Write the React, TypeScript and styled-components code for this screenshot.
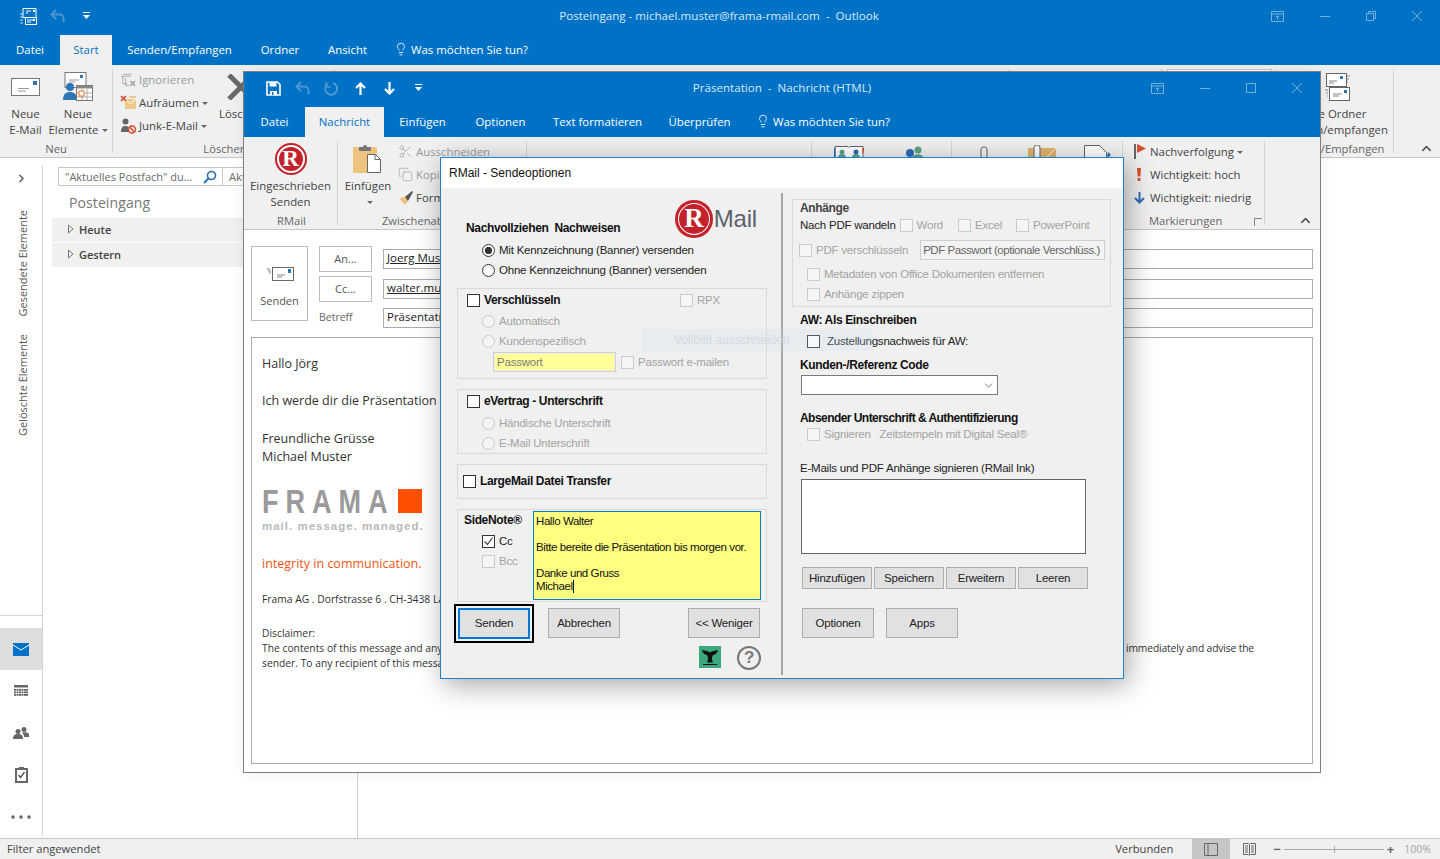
import { ReactNode } from 'react'
import styled, { createGlobalStyle } from 'styled-components'
import { ChevronUp, ChevronRight, ChevronDown, Lightbulb, Scissors, Copy } from 'lucide-react'

const BLUE = '#0072c6'
const RIBBON = '#f0f0f0'
const UI_FONT = "'Open Sans', 'Noto Sans', sans-serif"
const DLG_FONT = "'Liberation Sans', Arial, sans-serif"

const GlobalStyle = createGlobalStyle`
  html, body {
    margin: 0;
    width: 1440px;
    height: 859px;
    overflow: hidden;
    background: #fff;
    font-family: ${UI_FONT};
    font-size: 11.4px;
    color: #444;
  }
  * { box-sizing: border-box; }
`

/* ---------- outlook main window ---------- */

const Desktop = styled.div`
  position: relative;
  width: 1440px;
  height: 859px;
  overflow: hidden;
`

const Shell = styled.div`
  display: flex;
  flex-direction: column;
  height: 100%;
`

const Head = styled.div`
  background: ${BLUE};
  color: #fff;
  flex: none;
`

const TitleRow = styled.div`
  position: relative;
  display: flex;
  align-items: center;
  height: 32px;
`

const Qat = styled.div<{ $pad: number }>`
  display: flex;
  align-items: center;
  padding-left: ${p => p.$pad}px;
`

const QatCell = styled.div`
  flex: none;
  width: 29px;
  display: flex;
  align-items: center;
  justify-content: center;
`

const Title = styled.div<{ $cx: number }>`
  position: absolute;
  left: ${p => p.$cx}px;
  top: calc(50% - 1px);
  transform: translate(-50%, -50%);
  font-size: 11.6px;
  color: #d9e9f6;
  white-space: pre;
`

const WinButtons = styled.div`
  margin-left: auto;
  padding-right: 18px;
  display: flex;
  align-items: center;
  gap: 36px;
  opacity: 0.45;
`

const TabBar = styled.div`
  display: flex;
  height: 30px;
  margin-top: 3px;
  font-size: 11.4px;
`

const Tab = styled.div<{ $w: number; $active?: boolean }>`
  width: ${p => p.$w}px;
  display: flex;
  align-items: center;
  justify-content: center;
  padding-bottom: 2px;
  white-space: nowrap;
  background: ${p => (p.$active ? RIBBON : 'transparent')};
  color: ${p => (p.$active ? BLUE : '#fff')};
`

const TellMe = styled.div`
  display: flex;
  align-items: center;
  gap: 3px;
  padding: 0 0 2px 12px;
  white-space: nowrap;
`

const Ribbon = styled.div`
  flex: none;
  display: flex;
  height: 93px;
  background: ${RIBBON};
  border-bottom: 1px solid #c6c6c6;
  color: #444;
  font-size: 11.4px;
  line-height: 16px;
  overflow: hidden;
`

const Group = styled.div<{ $w: number }>`
  position: relative;
  flex: none;
  width: ${p => p.$w}px;
  display: flex;
  flex-direction: column;
  padding-top: 4px;

  &::after {
    content: '';
    position: absolute;
    right: 1px;
    top: 4px;
    height: 84px;
    width: 1px;
    background: #d4d4d4;
  }
`

const GroupBody = styled.div<{ $pad?: number }>`
  flex: 1;
  display: flex;
  min-height: 0;
  padding-left: ${p => p.$pad ?? 0}px;
`

const GroupLabel = styled.div<{ $align?: string; $pad?: number; $left?: number }>`
  flex: none;
  height: 18px;
  line-height: 20px;
  font-size: 11.2px;
  color: #666;
  text-align: ${p => p.$align ?? 'center'};
  padding-right: ${p => p.$pad ?? 0}px;
  padding-left: ${p => p.$left ?? 0}px;
  white-space: nowrap;
`

const BigButton = styled.div<{ $w: number; $icon: number }>`
  flex: none;
  width: ${p => p.$w}px;
  display: flex;
  flex-direction: column;
  align-items: center;
  text-align: center;
  white-space: nowrap;

  & > :first-child {
    height: ${p => p.$icon}px;
    flex: none;
  }
`

const SmallStack = styled.div<{ $ml?: number; $top?: number; $mt?: number; $w?: number }>`
  display: flex;
  flex-direction: column;
  flex: none;
  width: ${p => (p.$w ? `${p.$w}px` : 'auto')};
  margin-left: ${p => p.$ml ?? 0}px;
  margin-top: ${p => p.$mt ?? 0}px;
  padding-top: ${p => p.$top ?? 0}px;
`

const SmallItem = styled.div<{ $dim?: boolean; $gap?: number }>`
  display: flex;
  align-items: center;
  gap: ${p => p.$gap ?? 4}px;
  height: 23px;
  white-space: nowrap;
  color: ${p => (p.$dim ? '#9a9a9a' : '#444')};
`

const Caret = styled.span`
  display: inline-block;
  margin-left: 3px;
  vertical-align: middle;
  border-left: 3px solid transparent;
  border-right: 3px solid transparent;
  border-top: 3px solid #666;
`

const Launcher = styled.span`
  position: absolute;
  right: 4px;
  bottom: 3px;
  width: 8px;
  height: 8px;
  border-left: 1px solid #888;
  border-top: 1px solid #888;
`

const Collapse = styled.div<{ $right: number }>`
  margin-left: auto;
  align-self: flex-end;
  margin-right: ${p => p.$right}px;
  height: 16px;
  color: #555;
`

const SearchStub = styled.div`
  margin: 0 0 0 4px;
  width: 105px;
  height: 24px;
  background: #fff;
  border: 1px solid #c6c6c6;
`

const Main = styled.div`
  flex: 1;
  display: flex;
  min-height: 0;
`

const Nav = styled.div`
  flex: none;
  width: 43px;
  display: flex;
  flex-direction: column;
  position: relative;
  align-items: stretch;

  &::after {
    content: '';
    position: absolute;
    right: 0;
    top: 8px;
    bottom: 2px;
    width: 1px;
    background: #d4d4d4;
  }
`

const NavToggle = styled.div`
  height: 40px;
  display: flex;
  align-items: center;
  justify-content: center;
  color: #555;
`

const VerticalLabel = styled.div<{ $mt: number }>`
  writing-mode: vertical-rl;
  transform: rotate(180deg);
  align-self: center;
  margin-top: ${p => p.$mt}px;
  margin-left: 3px;
  font-size: 11px;
  line-height: 16px;
  color: #555;
  white-space: nowrap;
`

const NavIcons = styled.div`
  margin-top: auto;
  padding-top: 12px;
  border-top: 1px solid #d4d4d4;
  margin-right: 1px;
`

const NavIcon = styled.div<{ $active?: boolean }>`
  height: 42px;
  display: flex;
  align-items: center;
  justify-content: center;
  background: ${p => (p.$active ? '#dedede' : 'transparent')};
`

const FolderPane = styled.div`
  flex: none;
  width: 315px;
  border-right: 1px solid #d0d0d0;
  padding-top: 9px;
`

const SearchRow = styled.div`
  display: flex;
  margin-left: 15px;
  height: 19px;
`

const SearchBox = styled.div<{ $w: number }>`
  width: ${p => p.$w}px;
  border: 1px solid #c6c6c6;
  display: flex;
  align-items: center;
  justify-content: space-between;
  padding: 0 5px 0 6px;
  color: #6a6a6a;
  font-size: 11px;
  white-space: nowrap;

  & + & {
    border-left: 0;
  }
`

const FolderTitle = styled.div`
  font-size: 14px;
  line-height: 20px;
  margin: 7px 0 5px 26px;
  color: #777;
  letter-spacing: 0.1px;
`

const DateRow = styled.div`
  height: 24px;
  margin: 0 0 1px 9px;
  background: #f0f0f0;
  display: flex;
  align-items: center;
  gap: 5px;
  padding: 0 0 2px 16px;
  font-size: 11px;
  font-weight: 600;
  color: #444;
`

const StatusBar = styled.div`
  flex: none;
  height: 21px;
  background: #f0f0f0;
  border-top: 1px solid #c6c6c6;
  display: flex;
  align-items: stretch;
  font-size: 11.2px;
  color: #444;
`

const StatusText = styled.div<{ $ml?: number; $auto?: boolean }>`
  display: flex;
  align-items: center;
  padding-bottom: 2px;
  margin-left: ${p => (p.$auto ? 'auto' : `${p.$ml ?? 0}px`)};
  white-space: nowrap;
`

const ViewButton = styled.div<{ $active?: boolean; $w: number; $ml?: number }>`
  width: ${p => p.$w}px;
  margin-left: ${p => p.$ml ?? 0}px;
  display: flex;
  align-items: center;
  justify-content: center;
  background: ${p => (p.$active ? '#c6c6c6' : 'transparent')};
`

const Zoomer = styled.div`
  display: flex;
  align-items: center;
  margin-left: 5px;
  width: 121px;
  gap: 3px;
  color: #555;
`

const ZoomTrack = styled.div`
  position: relative;
  flex: none;
  width: 100px;
  height: 1px;
  background: #aaa;

  &::after {
    content: '';
    position: absolute;
    left: 50px;
    top: -3px;
    width: 1px;
    height: 7px;
    background: #aaa;
  }
`

const ZoomSign = styled.span`
  font-weight: 700;
  font-size: 13px;
  line-height: 1;
  color: #666;
`

const ZoomPct = styled.div`
  display: flex;
  align-items: center;
  margin-left: 10px;
  color: #a5a5a5;
  font-size: 10.5px;
`

/* ---------- message window ---------- */

const MessageWindow = styled.div`
  position: absolute;
  left: 243px;
  top: 71px;
  width: 1078px;
  height: 702px;
  border: 1px solid #7f7f7f;
  background: #fff;
  display: flex;
  flex-direction: column;
  box-shadow: 0 0 14px rgba(0, 0, 0, 0.07);
`

const Compose = styled.div`
  flex: 1;
  display: flex;
  flex-direction: column;
  padding: 16px 7px 8px;
  min-height: 0;
`

const ComposeHead = styled.div`
  display: flex;
  gap: 11px;
`

const SendTile = styled.div`
  flex: none;
  width: 57px;
  height: 75px;
  border: 1px solid #bdbdbd;
  display: flex;
  flex-direction: column;
  align-items: center;
  justify-content: flex-end;
  gap: 12px;
  padding-bottom: 12px;
  font-size: 11px;
  color: #555;
`

const Fields = styled.div`
  flex: 1;
  display: flex;
  flex-direction: column;
  gap: 4px;
`

const FieldRow = styled.div<{ $mt?: number }>`
  display: flex;
  align-items: center;
  gap: 11px;
  height: 26px;
  margin-top: ${p => p.$mt ?? 0}px;
`

const AddrButton = styled.div`
  flex: none;
  width: 53px;
  height: 26px;
  padding-bottom: 2px;
  border: 1px solid #bdbdbd;
  display: flex;
  align-items: center;
  justify-content: center;
  font-size: 11px;
  color: #555;
`

const FieldLabel = styled.div`
  flex: none;
  width: 53px;
  padding-bottom: 2px;
  font-size: 10.5px;
  color: #666;
`

const FieldInput = styled.div`
  flex: 1;
  height: 20px;
  border: 1px solid #ababab;
  padding-left: 3px;
  line-height: 16px;
  font-size: 11.5px;
  color: #222;
  white-space: nowrap;
  overflow: hidden;
`

const Addressee = styled.span`
  text-decoration: underline;
`

const MailBody = styled.div`
  flex: 1;
  margin-top: 6px;
  border: 1px solid #ababab;
  padding: 17px 10px 0;
  overflow: hidden;
  color: #333;
`

const Line = styled.div<{ $mt?: number; $size?: number; $color?: string }>`
  margin-top: ${p => p.$mt ?? 0}px;
  font-size: ${p => p.$size ?? 12.5}px;
  line-height: ${p => ((p.$size ?? 12.5) < 12 ? 15 : 18)}px;
  color: ${p => p.$color ?? '#333'};
  white-space: nowrap;
`

const SplitLine = styled(Line)`
  display: flex;
  justify-content: space-between;
  padding-right: 48px;

  span:last-child {
    letter-spacing: -0.15px;
  }
`

const FramaRow = styled.div`
  display: flex;
  align-items: flex-start;
  margin-top: 23px;
  height: 25px;
`

const FramaWord = styled.div`
  flex: none;
  width: 136px;
  font-family: ${DLG_FONT};
  font-size: 33px;
  line-height: 25px;
  font-weight: 700;
  letter-spacing: 8.5px;
  color: #9a9a9a;
  white-space: nowrap;
  transform: scaleX(0.82);
  transform-origin: left center;
`

const FramaSquare = styled.div`
  width: 24px;
  height: 24px;
  background: #ff5000;
`

const FramaTag = styled.div`
  margin-top: 6px;
  font-family: ${DLG_FONT};
  font-size: 11.5px;
  line-height: 13px;
  font-weight: 700;
  letter-spacing: 1px;
  color: #b9b9b9;
  white-space: nowrap;
`

/* ---------- rmail dialog ---------- */

const Dialog = styled.div`
  position: absolute;
  left: 440px;
  top: 157px;
  width: 684px;
  height: 522px;
  background: ${RIBBON};
  border: 1px solid #1b83d6;
  box-shadow: 4px 6px 26px rgba(0, 0, 0, 0.35);
  font-family: ${DLG_FONT};
  font-size: 11.5px;
  letter-spacing: -0.22px;
  color: #222;
  display: flex;
  flex-direction: column;
`

const DialogTitle = styled.div`
  flex: none;
  height: 30px;
  background: #fff;
  padding-left: 8px;
  display: flex;
  align-items: center;
  font-size: 12px;
  letter-spacing: 0;
  color: #111;
`

const DialogBody = styled.div`
  flex: 1;
  display: flex;
  min-height: 0;
`

const LeftCol = styled.div`
  flex: none;
  width: 342px;
  margin: 5px 0 3px;
  padding: 7px 14px 0 16px;
  border-right: 2px solid #a5a5a5;
  display: flex;
  flex-direction: column;
`

const RightCol = styled.div`
  flex: 1;
  padding: 11px 0 0 9px;
  display: flex;
  flex-direction: column;
`

const HeadRow = styled.div`
  display: flex;
  justify-content: space-between;
  height: 40px;
  padding-right: 10px;
`

const SectionHead = styled.div<{ $mt?: number; $ml?: number; $color?: string; $tight?: boolean }>`
  margin-top: ${p => p.$mt ?? 0}px;
  margin-left: ${p => p.$ml ?? 0}px;
  font-weight: 700;
  font-size: 12px;
  line-height: 16px;
  letter-spacing: ${p => (p.$tight ? -0.55 : -0.35)}px;
  color: ${p => p.$color ?? '#111'};
  white-space: pre;
`

const Logo = styled.div`
  display: flex;
  align-items: center;
  height: 37px;
`

const LogoWord = styled.span`
  font-size: 24px;
  color: #59636e;
  margin-left: 1px;
  letter-spacing: -0.2px;
`

const Seal = styled.div<{ $size: number }>`
  flex: none;
  width: ${p => p.$size}px;
  height: ${p => p.$size}px;
  border-radius: 50%;
  background: #c4222a;
  box-shadow: inset 0 0 0 ${p => Math.round(p.$size / 15)}px #c4222a, inset 0 0 0 ${p => Math.round(p.$size / 9)}px #fff;
  color: #fff;
  display: flex;
  align-items: center;
  justify-content: center;
  font-family: 'Liberation Serif', serif;
  font-weight: 700;
  font-size: ${p => Math.round(p.$size * 0.72)}px;
`

const Option = styled.div<{ $ml?: number; $mt?: number; $h?: number; $off?: boolean; $gap?: number }>`
  display: flex;
  align-items: center;
  gap: ${p => p.$gap ?? 4}px;
  height: ${p => p.$h ?? 20}px;
  margin-left: ${p => p.$ml ?? 0}px;
  margin-top: ${p => p.$mt ?? 0}px;
  color: ${p => (p.$off ? '#a3a3a3' : '#222')};
  white-space: pre;
`

const Radio = styled.span<{ $on?: boolean; $off?: boolean }>`
  flex: none;
  width: 13px;
  height: 13px;
  border-radius: 50%;
  border: 1px solid ${p => (p.$off ? '#c8c8c8' : '#333')};
  background: ${p =>
    p.$on ? 'radial-gradient(circle, #333 0 3.4px, #fff 3.9px)' : p.$off ? '#f4f4f4' : '#fff'};
`

const Check = styled.span<{ $off?: boolean; $on?: boolean }>`
  flex: none;
  width: 13px;
  height: 13px;
  border: 1px solid ${p => (p.$off ? '#cbcbcb' : '#333')};
  background: ${p => (p.$off ? '#f5f5f5' : '#fff')};
  display: flex;

  svg {
    display: ${p => (p.$on ? 'block' : 'none')};
  }
`

const Box = styled.div<{ $h: number; $mt?: number; $pad?: number; $row?: boolean; $w?: number }>`
  flex: none;
  width: ${p => (p.$w ? `${p.$w}px` : 'auto')};
  height: ${p => p.$h}px;
  margin-top: ${p => p.$mt ?? 0}px;
  border: 1px solid #d9d9d9;
  padding-left: ${p => p.$pad ?? 9}px;
  display: flex;
  flex-direction: ${p => (p.$row ? 'row' : 'column')};
`

const SpreadRow = styled.div`
  display: flex;
  justify-content: space-between;
  padding-right: 46px;
`

const PasswordField = styled.div`
  flex: none;
  width: 123px;
  height: 20px;
  margin-left: 26px;
  background: #ffff99;
  border: 1px solid #d0d0d0;
  padding-left: 3px;
  line-height: 18px;
  color: #7d7d7d;
  outline: 1px solid #eee;
  outline-offset: -2px;
`

const FlatRow = styled.div<{ $mt?: number }>`
  display: flex;
  align-items: center;
  margin-top: ${p => p.$mt ?? 0}px;
`

const SideColumn = styled.div`
  flex: none;
  width: 69px;
  padding-top: 2px;
`

const NoteArea = styled.div`
  flex: none;
  width: 228px;
  height: 89px;
  margin-top: 1px;
  background: #ffff80;
  border: 1px solid #0b79d0;
  padding: 3px 2px;
  line-height: 13px;
  letter-spacing: -0.42px;
  color: #111;
  white-space: pre;
`

const Cursor = styled.span`
  display: inline-block;
  width: 1px;
  height: 13px;
  background: #111;
  vertical-align: top;
`

const Actions = styled.div`
  flex: none;
  display: flex;
  margin-top: 6px;
  height: 31px;
  padding-right: 7px;
`

const Btn = styled.div<{ $w?: number; $h?: number; $primary?: boolean; $ml?: number; $auto?: boolean }>`
  flex: none;
  width: ${p => p.$w ?? 72}px;
  height: ${p => p.$h ?? (p.$primary ? 31 : 30)}px;
  padding-bottom: 1px;
  margin-left: ${p => (p.$auto ? 'auto' : `${p.$ml ?? 0}px`)};
  background: #e1e1e1;
  border: ${p => (p.$primary ? '2px solid #0078d7' : '1px solid #adadad')};
  outline: ${p => (p.$primary ? '2px solid #000' : 'none')};
  outline-offset: 2px;
  display: flex;
  align-items: center;
  justify-content: center;
  color: #222;
  white-space: pre;
`

const Extras = styled.div`
  flex: none;
  display: flex;
  justify-content: flex-end;
  align-items: flex-start;
  gap: 16px;
  margin-top: 7px;
  padding-right: 6px;
`

const WhaleBadge = styled.div`
  width: 22px;
  height: 22px;
  background: #3ba77c;
  display: flex;
  align-items: center;
  justify-content: center;
`

const HelpBadge = styled.div`
  width: 24px;
  height: 24px;
  border: 2.5px solid #777;
  border-radius: 50%;
  display: flex;
  align-items: center;
  justify-content: center;
  font-weight: 700;
  font-size: 17px;
  color: #777;
`

const DisabledField = styled.div`
  flex: none;
  width: 185px;
  height: 20px;
  margin-left: 12px;
  border: 1px solid #cfcfcf;
  background: #f3f3f3;
  padding-left: 2px;
  line-height: 18px;
  letter-spacing: -0.45px;
  color: #666;
  white-space: nowrap;
`

const SelectBox = styled.div`
  flex: none;
  width: 197px;
  height: 20px;
  margin: 2px 0 0 9px;
  background: #fff;
  border: 1px solid #7a7a7a;
  display: flex;
  align-items: center;
  justify-content: flex-end;
  padding-right: 2px;
  color: #555;
`

const InkBox = styled.div`
  flex: none;
  width: 285px;
  height: 75px;
  margin: 3px 0 0 9px;
  background: #fff;
  border: 1px solid #666;
`

const BtnRow = styled.div<{ $mt: number; $gap: number }>`
  display: flex;
  gap: ${p => p.$gap}px;
  margin: ${p => p.$mt}px 0 0 10px;
`

const Ghost = styled.div`
  position: absolute;
  left: 642px;
  top: 329px;
  width: 230px;
  height: 22px;
  padding-left: 32px;
  line-height: 22px;
  font-family: ${DLG_FONT};
  font-size: 12px;
  color: #d6dbdf;
  background: rgba(200, 224, 244, 0.22);
  white-space: nowrap;
  pointer-events: none;
`

/* ---------- drawings ---------- */

const Envelope = () => (
  <svg width={29} height={18} viewBox="0 0 29 18">
    <rect x=".5" y=".5" width="28" height="17" fill="#fff" stroke="#777" />
    <rect x="22" y="3" width="4" height="4" fill="#2e75b6" />
    <path d="M7 10.500h11M7 13h8" stroke="#999" />
  </svg>
)

const SendIcon = () => (
  <svg width="28" height="14" viewBox="0 0 28 14">
    <rect x="6.500" y=".5" width="21" height="13" fill="#fff" stroke="#666" />
    <rect x="22" y="2" width="3" height="4" fill="#2e75b6" />
    <path d="M11 8h8M11 10h5M1 2h3M2 4h3M3 6h2" stroke="#888" />
  </svg>
)

const NewItemsIcon = () => (
  <svg width="30" height="30" viewBox="0 0 30 30">
    <rect x="2" y=".5" width="21" height="15" fill="#fff" stroke="#777" />
    <rect x="17" y="3" width="3" height="3" fill="#2e75b6" />
    <path d="M6 8h10M6 10h6" stroke="#999" />
    <circle cx="7" cy="15" r="4" fill="#2e75b6" />
    <path d="M0 28c0-6 3-8 7-8s7 2 7 8z" fill="#2e75b6" />
    <rect x="13.500" y="13.500" width="16" height="15" fill="#fff" stroke="#777" />
    <path d="M13.500 13.500h16v3h-16z" fill="#888" />
    <path d="M19 17v11M24 17v11M14 21h15M14 25h15" stroke="#aaa" />
    <rect x="16" y="19" width="5" height="5" fill="#fff" stroke="#e8762a" />
  </svg>
)

const IgnoreIcon = () => (
  <svg width="17" height="16" viewBox="0 0 18 16" fill="none" stroke="#aaa">
    <path d="M1 4h11M3 2h9M3 4v8h5M6 6v8h4" />
    <path d="M11 9l5 5M16 9l-5 5" stroke="#999" strokeWidth="1.400" />
  </svg>
)

const CleanIcon = () => (
  <svg width="17" height="15" viewBox="0 0 17 15">
    <path d="M5 4l11 0v10H5z" fill="#efc98a" />
    <path d="M5 4l5.500 5L16 4" fill="none" stroke="#fff" />
    <path d="M1 1l5 5M6 1L1 6" stroke="#d9452e" strokeWidth="1.700" />
    <path d="M9 2h7" stroke="#d9a14a" />
  </svg>
)

const JunkIcon = () => (
  <svg width="17" height="16" viewBox="0 0 17 16">
    <circle cx="5.500" cy="3.500" r="3" fill="#666" />
    <path d="M1 14c0-5 2-6 4.500-6S9 9 9 11v3z" fill="#666" />
    <circle cx="12" cy="11.500" r="3.500" fill="#fff" stroke="#d9452e" strokeWidth="1.500" />
    <path d="M9.800 9.300l4.400 4.400" stroke="#d9452e" strokeWidth="1.500" />
  </svg>
)

const BigX = () => (
  <svg width="28" height="26" viewBox="0 0 28 26">
    <path d="M2 1l24 24M26 1L2 25" fill="none" stroke="#6a6a6a" strokeWidth="5" />
  </svg>
)

const SaveIcon = () => (
  <svg width="15" height="15" viewBox="0 0 15 15">
    <path d="M1 1h10.500L14 3.500V14H1z" fill="none" stroke="#fff" strokeWidth="1.600" />
    <path d="M3.500 1.500h7v4h-7zM4 10h7v4H4z" fill="#fff" />
    <rect x="6" y="11" width="1.500" height="3" fill={BLUE} />
  </svg>
)

const UndoIcon = () => (
  <svg width="15" height="14" viewBox="0 0 15 14" fill="none" stroke="#4d97d2" strokeWidth="2">
    <path d="M6 1L1.500 5.500 6 10" />
    <path d="M2 5.500h7.500a4 4 0 0 1 4 4V13" />
  </svg>
)

const RedoIcon = () => (
  <svg width="15" height="15" viewBox="0 0 15 15" fill="none" stroke="#4d97d2" strokeWidth="2">
    <path d="M9 2a6 6 0 1 1-5 .6" />
    <path d="M2 1v5h5" strokeWidth="1.500" />
  </svg>
)

const Arrow = ({ down }: { down?: boolean }) => (
  <svg width="11" height="13" viewBox="0 0 11 13" fill="none" stroke="#fff" strokeWidth="2.200">
    <path d={down ? 'M5.500 0v11M1 7l4.500 4.500L10 7' : 'M5.500 13V2M1 6l4.500-4.500L10 6'} />
  </svg>
)

const Customize = () => (
  <svg width="7" height="8" viewBox="0 0 7 8">
    <path d="M0 .5h7" stroke="#fff" />
    <path d="M0 3h7L3.500 7z" fill="#fff" />
  </svg>
)

const QatList = () => (
  <svg width="17" height="17" viewBox="0 0 17 17" fill="none" stroke="#fff">
    <path d="M3 .5h13v9H3zM.5 6h2M.5 9h2M.5 12h2M.5 15h2" />
    <rect x="5.500" y="9.500" width="11" height="7" fill={BLUE} />
    <path d="M7 12h6M7 14h4M6 3h5M6 5h2" />
    <rect x="13" y="2" width="2" height="2" fill="#fff" stroke="none" />
    <rect x="13" y="11" width="2" height="2" fill="#fff" stroke="none" />
  </svg>
)

const RibbonMode = () => (
  <svg width="13" height="11" viewBox="0 0 13 11" fill="none" stroke="#fff">
    <path d="M.5.500h12v10H.5zM.5 3h12M6.500 9V5M4.500 6.500l2-2 2 2" />
  </svg>
)
const MinIcon = () => (
  <svg width="10" height="10" viewBox="0 0 10 10" stroke="#fff">
    <path d="M0 5.500h10" />
  </svg>
)
const MaxIcon = () => (
  <svg width="10" height="10" viewBox="0 0 10 10" fill="none" stroke="#fff">
    <path d="M.5.500h9v9h-9z" />
  </svg>
)
const RestoreIcon = () => (
  <svg width="10" height="10" viewBox="0 0 10 10" fill="none" stroke="#fff">
    <path d="M.5 2.500h7v7h-7zM2.500 2.500v-2h7v7h-2" />
  </svg>
)
const CloseIcon = () => (
  <svg width="10" height="10" viewBox="0 0 10 10" stroke="#fff">
    <path d="M0 0l10 10M10 0L0 10" />
  </svg>
)

const PasteIcon = () => (
  <svg width="30" height="30" viewBox="0 0 30 30">
    <rect x="0" y="3" width="24" height="26" rx="1" fill="#edc37d" />
    <path d="M6 3h4a2 2 0 0 1 4 0h4v4H6z" fill="#777" />
    <path d="M14.500 10.500h8l5 5v13h-13z" fill="#fff" stroke="#666" />
    <path d="M22 10.500v5h5" fill="none" stroke="#666" />
  </svg>
)

const BrushIcon = () => (
  <svg width="15" height="14" viewBox="0 0 15 14">
    <path d="M1 7l6-1 3 4-3 4z" fill="#edc37d" />
    <path d="M7 6l7-6 1 1-5 9z" fill="#555" />
  </svg>
)

const FlagIcon = () => (
  <svg width="12" height="15" viewBox="0 0 12 15">
    <rect x="0" y="0" width="2" height="15" fill="#666" />
    <path d="M3 0l9 4.500L3 9z" fill="#d9502e" />
  </svg>
)

const BangIcon = () => (
  <svg width="4" height="13" viewBox="0 0 4 13" fill="#d9502e">
    <path d="M0 0h4l-.7 8.500H.7z" />
    <rect x=".6" y="10" width="2.800" height="3" />
  </svg>
)

const DownIcon = () => (
  <svg width="11" height="12" viewBox="0 0 11 12" fill="none" stroke="#2e6cb5" strokeWidth="2">
    <path d="M5.500 0v10M1 6l4.500 4.500L10 6" />
  </svg>
)

const AddressBook = () => (
  <svg width="30" height="12" viewBox="0 0 30 12">
    <path d="M1 .5h13l1 1 1-1h13V12H1z" fill="#fff" stroke="#666" />
    <circle cx="8" cy="6" r="2.500" fill="#5da583" />
    <circle cx="22" cy="6" r="2.500" fill="#2e6cb5" />
    <path d="M4 12a4 4 0 0 1 8 0zM18 12a4 4 0 0 1 8 0z" fill="#5da583" />
    <rect x="0" y="2" width="1.500" height="10" fill="#2e6cb5" />
    <rect x="28.500" y="2" width="1.500" height="5" fill="#d9502e" />
  </svg>
)

const PeopleIcon = () => (
  <svg width="22" height="12" viewBox="0 0 22 12">
    <circle cx="6" cy="7" r="4" fill="#2e6cb5" />
    <circle cx="14" cy="4" r="3.500" fill="#5da583" />
    <path d="M8 12c1-5 10-5 12 0z" fill="#5da583" />
  </svg>
)

const ClipIcon = () => (
  <svg width="8" height="12" viewBox="0 0 8 12" fill="none" stroke="#777" strokeWidth="1.200">
    <path d="M1 12V4a3 3 0 0 1 6 0v8" />
  </svg>
)

const MailClipIcon = () => (
  <svg width="28" height="13" viewBox="0 0 28 13">
    <rect x="0" y="3" width="28" height="10" fill="#e2b26b" />
    <path d="M28 3l-10 10" stroke="#fff" />
    <path d="M6 13V3a3 3 0 0 1 6 0v10" fill="#fff" stroke="#777" strokeWidth="1.200" />
  </svg>
)

const DocIcon = () => (
  <svg width="27" height="13" viewBox="0 0 27 13">
    <path d="M.5 13V.5h15l7 7V13" fill="#fff" stroke="#666" />
    <path d="M24 7l3 3-4 3z" fill="#2e6cb5" />
  </svg>
)

const MailIcon = () => (
  <svg width="16" height="13" viewBox="0 0 16 13">
    <rect width="16" height="13" fill="#0072c6" />
    <path d="M0 2l8 5 8-5" fill="none" stroke="#fff" />
  </svg>
)

const CalendarIcon = () => (
  <svg width="14" height="12" viewBox="0 0 14 12" fill="#666">
    <rect width="14" height="2.500" />
    {[4, 6.5, 9].flatMap(y =>
      [0, 2.5, 5, 7.5, 10, 12].map(x => <rect key={`${x}-${y}`} x={x} y={y} width="2" height="1.800" />)
    )}
  </svg>
)

const PeopleNav = () => (
  <svg width="16" height="12" viewBox="0 0 16 12" fill="#666">
    <circle cx="5" cy="4.500" r="2.500" />
    <path d="M0 12c0-4 2-5 5-5s5 1 5 5z" />
    <circle cx="11" cy="2.500" r="2.500" />
    <path d="M9 6c1-1 6-1 7 1v3h-5c0-2-.5-3-2-4z" />
  </svg>
)

const TasksNav = () => (
  <svg width="13" height="16" viewBox="0 0 13 16">
    <path d="M0 1h4V0h5v1h4v15H0z" fill="#666" />
    <rect x="2" y="3" width="9" height="11" fill="#fff" />
    <path d="M3.500 8l2 2.500L9.500 5" fill="none" stroke="#555" strokeWidth="1.400" />
  </svg>
)

const DotsNav = () => (
  <svg width="20" height="4" viewBox="0 0 20 4" fill="#666">
    <circle cx="2" cy="2" r="1.800" />
    <circle cx="10" cy="2" r="1.800" />
    <circle cx="18" cy="2" r="1.800" />
  </svg>
)

const SearchGlass = () => (
  <svg width="14" height="14" viewBox="0 0 14 14" fill="none" stroke="#2e75b6" strokeWidth="1.700">
    <circle cx="8.500" cy="5.500" r="4" />
    <path d="M5.500 8.500L1 13" strokeWidth="2.200" />
  </svg>
)

const RowArrow = () => (
  <svg width="6" height="10" viewBox="0 0 6 10" fill="none" stroke="#777">
    <path d="M.5 1l4.500 4-4.500 4z" />
  </svg>
)

const NormalView = () => (
  <svg width="14" height="13" viewBox="0 0 14 13" fill="none" stroke="#666">
    <path d="M.5.500h13v12H.5zM4 .5v12" />
  </svg>
)

const ReadView = () => (
  <svg width="13" height="13" viewBox="0 0 13 13" fill="none" stroke="#666">
    <path d="M.5.500h5l1 1 1-1h5v11h-5l-1 1-1-1h-5zM6.500 1.500v10M2 3h3M2 5h3M2 7h3M2 9h3M8 3h3M8 5h3M8 7h3M8 9h3" />
  </svg>
)

const AllFoldersIcon = () => (
  <svg width="30" height="28" viewBox="0 0 30 28">
    <rect x="5.500" y=".5" width="20" height="13" fill="#fff" stroke="#666" />
    <rect x="19" y="3" width="3" height="3" fill="#2e75b6" />
    <path d="M26 3h3M26 6h2M26 9h1M8 8h8M8 10h5" stroke="#888" />
    <rect x="8.500" y="14.500" width="20" height="13" fill="#fff" stroke="#666" />
    <rect x="23" y="17" width="3" height="3" fill="#2e75b6" />
    <path d="M4 17h3M5 20h2M6 23h1M12 21h9M12 23h6" stroke="#888" />
  </svg>
)

const Tick = () => (
  <svg width="11" height="11" viewBox="0 0 11 11" fill="none" stroke="#333" strokeWidth="1.100">
    <path d="M1.500 5.500l3 3 5-7" />
  </svg>
)

const WhaleTail = () => (
  <svg width="18" height="18" viewBox="0 0 18 18" fill="#111">
    <path d="M1 2c3 .5 6 1 8 2.500C11 3 14 2.500 17 2c-.5 2.500-2 4.500-5.500 5.500-.8 2-.6 5 .5 7H6c1-2 1.300-5 .5-7C3 6.500 1.500 4.500 1 2z" />
    <rect x="2" y="16" width="14" height="1" />
  </svg>
)

const CheckBox = (p: { off?: boolean; on?: boolean }) => (
  <Check $off={p.off} $on={p.on}>
    <Tick />
  </Check>
)

const Opt = ({ kind, label, off, on, ml, mt, h, gap }: {
  kind: 'radio' | 'check'
  label: ReactNode
  off?: boolean
  on?: boolean
  ml?: number
  mt?: number
  h?: number
  gap?: number
}) => (
  <Option $ml={ml} $mt={mt} $h={h} $off={off} $gap={gap}>
    {kind === 'radio' ? <Radio $on={on} $off={off} /> : <CheckBox off={off} on={on} />}
    <span>{label}</span>
  </Option>
)

/* ---------- page ---------- */

export default function App() {
  return (
    <Desktop>
      <GlobalStyle />
      <Shell>
        <Head>
          <TitleRow>
            <Qat $pad={14}>
              <QatCell><QatList /></QatCell>
              <QatCell><UndoIcon /></QatCell>
              <QatCell><Customize /></QatCell>
            </Qat>
            <Title $cx={719}>Posteingang - michael.muster@frama-rmail.com  -  Outlook</Title>
            <WinButtons>
              <RibbonMode />
              <MinIcon />
              <RestoreIcon />
              <CloseIcon />
            </WinButtons>
          </TitleRow>
          <TabBar>
            <Tab $w={60}>Datei</Tab>
            <Tab $w={52} $active>Start</Tab>
            <Tab $w={135}>Senden/Empfangen</Tab>
            <Tab $w={66}>Ordner</Tab>
            <Tab $w={69}>Ansicht</Tab>
            <TellMe>
              <Lightbulb size={14} strokeWidth={1.4} />
              Was möchten Sie tun?
            </TellMe>
          </TabBar>
        </Head>

        <Ribbon>
          <Group $w={114}>
            <GroupBody $pad={2}>
              <BigButton $w={47} $icon={37}>
                <SmallStack $top={9}><Envelope /></SmallStack>
                <span>Neue<br />E-Mail</span>
              </BigButton>
              <BigButton $w={58} $icon={37}>
                <SmallStack $top={3}><NewItemsIcon /></SmallStack>
                <span>Neue<br />Elemente<Caret /></span>
              </BigButton>
            </GroupBody>
            <GroupLabel $pad={2}>Neu</GroupLabel>
          </Group>
          <Group $w={222}>
            <GroupBody $pad={6}>
              <SmallStack $w={95} $mt={-1}>
                <SmallItem $dim $gap={2}><IgnoreIcon />Ignorieren</SmallItem>
                <SmallItem $gap={2}><CleanIcon /><span>Aufräumen<Caret /></span></SmallItem>
                <SmallItem $gap={2}><JunkIcon /><span>Junk-E-Mail<Caret /></span></SmallItem>
              </SmallStack>
              <BigButton $w={52} $icon={37}>
                <SmallStack $top={5}><BigX /></SmallStack>
                <span>Löschen</span>
              </BigButton>
            </GroupBody>
            <GroupLabel>Löschen</GroupLabel>
          </Group>
          <Group $w={674}><GroupBody /></Group>
          <Group $w={153}><GroupBody /></Group>
          <Group $w={114}><GroupBody><SearchStub /></GroupBody></Group>
          <Group $w={118}>
            <GroupBody>
              <BigButton $w={118} $icon={37}>
                <SmallStack $top={4}><AllFoldersIcon /></SmallStack>
                <span>Alle Ordner<br />senden/empfangen</span>
              </BigButton>
            </GroupBody>
            <GroupLabel $pad={6}>Senden/Empfangen</GroupLabel>
          </Group>
          <Collapse $right={6}><ChevronUp size={15} strokeWidth={2.4} /></Collapse>
        </Ribbon>

        <Main>
          <Nav>
            <NavToggle><ChevronRight size={13} strokeWidth={2.4} /></NavToggle>
            <VerticalLabel $mt={12}>Gesendete Elemente</VerticalLabel>
            <VerticalLabel $mt={18}>Gelöschte Elemente</VerticalLabel>
            <NavIcons>
              <NavIcon $active><MailIcon /></NavIcon>
              <NavIcon><CalendarIcon /></NavIcon>
              <NavIcon><PeopleNav /></NavIcon>
              <NavIcon><TasksNav /></NavIcon>
              <NavIcon><DotsNav /></NavIcon>
            </NavIcons>
          </Nav>
          <FolderPane>
            <SearchRow>
              <SearchBox $w={165}>
                "Aktuelles Postfach" du...
                <SearchGlass />
              </SearchBox>
              <SearchBox $w={120}>Aktuelles Postfach</SearchBox>
            </SearchRow>
            <FolderTitle>Posteingang</FolderTitle>
            <DateRow><RowArrow />Heute</DateRow>
            <DateRow><RowArrow />Gestern</DateRow>
          </FolderPane>
        </Main>

        <StatusBar>
          <StatusText $ml={7}>Filter angewendet</StatusText>
          <StatusText $auto>Verbunden</StatusText>
          <ViewButton $active $w={38} $ml={19}><NormalView /></ViewButton>
          <ViewButton $w={38}><ReadView /></ViewButton>
          <Zoomer>
            <ZoomSign>−</ZoomSign>
            <ZoomTrack />
            <ZoomSign>+</ZoomSign>
          </Zoomer>
          <ZoomPct>100%</ZoomPct>
          <StatusText $ml={9} />
        </StatusBar>
      </Shell>

      <MessageWindow>
        <Head>
          <TitleRow>
            <Qat $pad={15}>
              <QatCell><SaveIcon /></QatCell>
              <QatCell><UndoIcon /></QatCell>
              <QatCell><RedoIcon /></QatCell>
              <QatCell><Arrow /></QatCell>
              <QatCell><Arrow down /></QatCell>
              <QatCell><Customize /></QatCell>
            </Qat>
            <Title $cx={538}>Präsentation  -  Nachricht (HTML)</Title>
            <WinButtons>
              <RibbonMode />
              <MinIcon />
              <MaxIcon />
              <CloseIcon />
            </WinButtons>
          </TitleRow>
          <TabBar>
            <Tab $w={61}>Datei</Tab>
            <Tab $w={79} $active>Nachricht</Tab>
            <Tab $w={77}>Einfügen</Tab>
            <Tab $w={79}>Optionen</Tab>
            <Tab $w={115}>Text formatieren</Tab>
            <Tab $w={89}>Überprüfen</Tab>
            <TellMe>
              <Lightbulb size={14} strokeWidth={1.4} />
              Was möchten Sie tun?
            </TellMe>
          </TabBar>
        </Head>

        <Ribbon>
          <Group $w={95}>
            <GroupBody>
              <BigButton $w={93} $icon={37}>
                <SmallStack $top={2}><Seal $size={32}>R</Seal></SmallStack>
                <span>Eingeschrieben<br />Senden</span>
              </BigButton>
            </GroupBody>
            <GroupLabel>RMail</GroupLabel>
          </Group>
          <Group $w={189}>
            <GroupBody $pad={6}>
              <BigButton $w={46} $icon={37}>
                <SmallStack $top={3}><PasteIcon /></SmallStack>
                <span>Einfügen<br /><Caret /></span>
              </BigButton>
              <SmallStack $ml={7} $mt={-1}>
                <SmallItem $dim $gap={3}><Scissors size={15} strokeWidth={1.3} color="#aaa" />Ausschneiden</SmallItem>
                <SmallItem $dim $gap={3}><Copy size={15} strokeWidth={1.3} color="#aaa" />Kopieren</SmallItem>
                <SmallItem $gap={3}><BrushIcon />Format übertragen</SmallItem>
              </SmallStack>
            </GroupBody>
            <GroupLabel $pad={20}>Zwischenablage</GroupLabel>
          </Group>
          <Group $w={285}><GroupBody /></Group>
          <Group $w={140}>
            <GroupBody $pad={21}>
              <SmallStack $top={5}><AddressBook /></SmallStack>
              <SmallStack $top={5} $ml={40}><PeopleIcon /></SmallStack>
            </GroupBody>
          </Group>
          <Group $w={171}>
            <GroupBody $pad={27}>
              <SmallStack $top={5}><ClipIcon /></SmallStack>
              <SmallStack $top={4} $ml={40}><MailClipIcon /></SmallStack>
              <SmallStack $top={4} $ml={28}><DocIcon /></SmallStack>
            </GroupBody>
          </Group>
          <Group $w={142}>
            <GroupBody $pad={10}>
              <SmallStack $mt={-1}>
                <SmallItem $gap={4}><FlagIcon /><span>Nachverfolgung<Caret /></span></SmallItem>
                <SmallItem $gap={9}><SmallStack $ml={3}><BangIcon /></SmallStack>Wichtigkeit: hoch</SmallItem>
                <SmallItem $gap={5}><DownIcon />Wichtigkeit: niedrig</SmallItem>
              </SmallStack>
            </GroupBody>
            <GroupLabel $align="left" $left={25}>Markierungen</GroupLabel>
            <Launcher />
          </Group>
          <Collapse $right={7}><ChevronUp size={15} strokeWidth={2.4} /></Collapse>
        </Ribbon>

        <Compose>
          <ComposeHead>
            <SendTile>
              <SendIcon />
              Senden
            </SendTile>
            <Fields>
              <FieldRow>
                <AddrButton>An...</AddrButton>
                <FieldInput><Addressee>Joerg Mus</Addressee></FieldInput>
              </FieldRow>
              <FieldRow>
                <AddrButton>Cc...</AddrButton>
                <FieldInput><Addressee>walter.mus</Addressee></FieldInput>
              </FieldRow>
              <FieldRow $mt={-1}>
                <FieldLabel>Betreff</FieldLabel>
                <FieldInput>Präsentation</FieldInput>
              </FieldRow>
            </Fields>
          </ComposeHead>
          <MailBody>
            <Line>Hallo Jörg</Line>
            <Line $mt={19}>Ich werde dir die Präsentation</Line>
            <Line $mt={20}>Freundliche Grüsse</Line>
            <Line>Michael Muster</Line>
            <FramaRow>
              <FramaWord>FRAMA</FramaWord>
              <FramaSquare />
            </FramaRow>
            <FramaTag>mail. message. managed.</FramaTag>
            <Line $mt={22} $color="#f2540f">integrity in communication.</Line>
            <Line $mt={19} $size={10.3}>Frama AG . Dorfstrasse 6 . CH-3438 La</Line>
            <Line $mt={19} $size={10.3}>Disclaimer:</Line>
            <SplitLine $size={10.3}>
              <span>The contents of this message and any</span>
              <span>immediately and advise the</span>
            </SplitLine>
            <Line $size={10.3}>sender. To any recipient of this messag</Line>
          </MailBody>
        </Compose>
      </MessageWindow>

      <Dialog>
        <DialogTitle>RMail - Sendeoptionen</DialogTitle>
        <DialogBody>
          <LeftCol>
            <HeadRow>
              <SectionHead $mt={20} $ml={9}>{'Nachvollziehen  Nachweisen'}</SectionHead>
              <Logo>
                <Seal $size={38}>R</Seal>
                <LogoWord>Mail</LogoWord>
              </Logo>
            </HeadRow>
            <Opt kind="radio" on label="Mit Kennzeichnung (Banner) versenden" ml={25} />
            <Opt kind="radio" label="Ohne Kennzeichnung (Banner) versenden" ml={25} />

            <Box $h={91} $mt={8}>
              <SpreadRow>
                <Option $mt={1}>
                  <CheckBox />
                  <SectionHead>Verschlüsseln</SectionHead>
                </Option>
                <Opt kind="check" off label="RPX" mt={1} />
              </SpreadRow>
              <Opt kind="radio" off label="Automatisch" ml={15} mt={1} />
              <Opt kind="radio" off label="Kundenspezifisch" ml={15} />
              <FlatRow $mt={1}>
                <PasswordField>Passwort</PasswordField>
                <Opt kind="check" off label="Passwort e-mailen" ml={5} />
              </FlatRow>
            </Box>

            <Box $h={65} $mt={10}>
              <Option $mt={1}>
                <CheckBox />
                <SectionHead>eVertrag - Unterschrift</SectionHead>
              </Option>
              <Opt kind="radio" off label="Händische Unterschrift" ml={15} mt={2} />
              <Opt kind="radio" off label="E-Mail Unterschrift" ml={15} />
            </Box>

            <Box $h={35} $mt={10} $pad={5}>
              <Option $h={32}>
                <CheckBox />
                <SectionHead>LargeMail Datei Transfer</SectionHead>
              </Option>
            </Box>

            <Box $h={93} $mt={10} $pad={6} $row>
              <SideColumn>
                <SectionHead>SideNote®</SectionHead>
                <Opt kind="check" on label="Cc" ml={18} mt={3} />
                <Opt kind="check" off label="Bcc" ml={18} />
              </SideColumn>
              <NoteArea>
                {'Hallo Walter\n\nBitte bereite die Präsentation bis morgen vor.\n\nDanke und Gruss\nMichael'}
                <Cursor />
              </NoteArea>
            </Box>

            <Actions>
              <Btn $primary $ml={1}>Senden</Btn>
              <Btn $ml={18}>Abbrechen</Btn>
              <Btn $auto>{'<< Weniger'}</Btn>
            </Actions>
            <Extras>
              <WhaleBadge><WhaleTail /></WhaleBadge>
              <HelpBadge>?</HelpBadge>
            </Extras>
          </LeftCol>

          <RightCol>
            <Box $w={319} $h={108} $pad={7}>
              <SectionHead $color="#444">Anhänge</SectionHead>
              <FlatRow>
                <Option $h={18}>Nach PDF wandeln</Option>
                <Opt kind="check" off label="Word" ml={4} h={18} />
                <Opt kind="check" off label="Excel" ml={15} h={18} />
                <Opt kind="check" off label="PowerPoint" ml={14} h={18} />
              </FlatRow>
              <FlatRow $mt={6}>
                <Opt kind="check" off label="PDF verschlüsseln" ml={-1} />
                <DisabledField>PDF Passwort (optionale Verschlüss.)</DisabledField>
              </FlatRow>
              <Opt kind="check" off label="Metadaten von Office Dokumenten entfernen" ml={7} mt={4} />
              <Opt kind="check" off label="Anhänge zippen" ml={7} />
            </Box>

            <SectionHead $mt={5} $ml={8}>AW: Als Einschreiben</SectionHead>
            <Opt kind="check" label="Zustellungsnachweis für AW:" ml={15} mt={3} gap={7} />
            <SectionHead $mt={6} $ml={8}>Kunden-/Referenz Code</SectionHead>
            <SelectBox><ChevronDown size={13} strokeWidth={1.4} /></SelectBox>
            <SectionHead $mt={15} $ml={8} $tight>Absender Unterschrift & Authentifizierung</SectionHead>
            <Opt kind="check" off label="Signieren   Zeitstempeln mit Digital Seal®" ml={15} h={16} />
            <Option $ml={8} $mt={18} $h={16}>E-Mails und PDF Anhänge signieren (RMail Ink)</Option>
            <InkBox />
            <BtnRow $mt={13} $gap={2}>
              <Btn $w={70} $h={22}>Hinzufügen</Btn>
              <Btn $w={70} $h={22}>Speichern</Btn>
              <Btn $w={70} $h={22}>Erweitern</Btn>
              <Btn $w={70} $h={22}>Leeren</Btn>
            </BtnRow>
            <BtnRow $mt={19} $gap={12}>
              <Btn>Optionen</Btn>
              <Btn>Apps</Btn>
            </BtnRow>
          </RightCol>
        </DialogBody>
      </Dialog>

      <Ghost>Vollbild ausschneiden</Ghost>
    </Desktop>
  )
}
